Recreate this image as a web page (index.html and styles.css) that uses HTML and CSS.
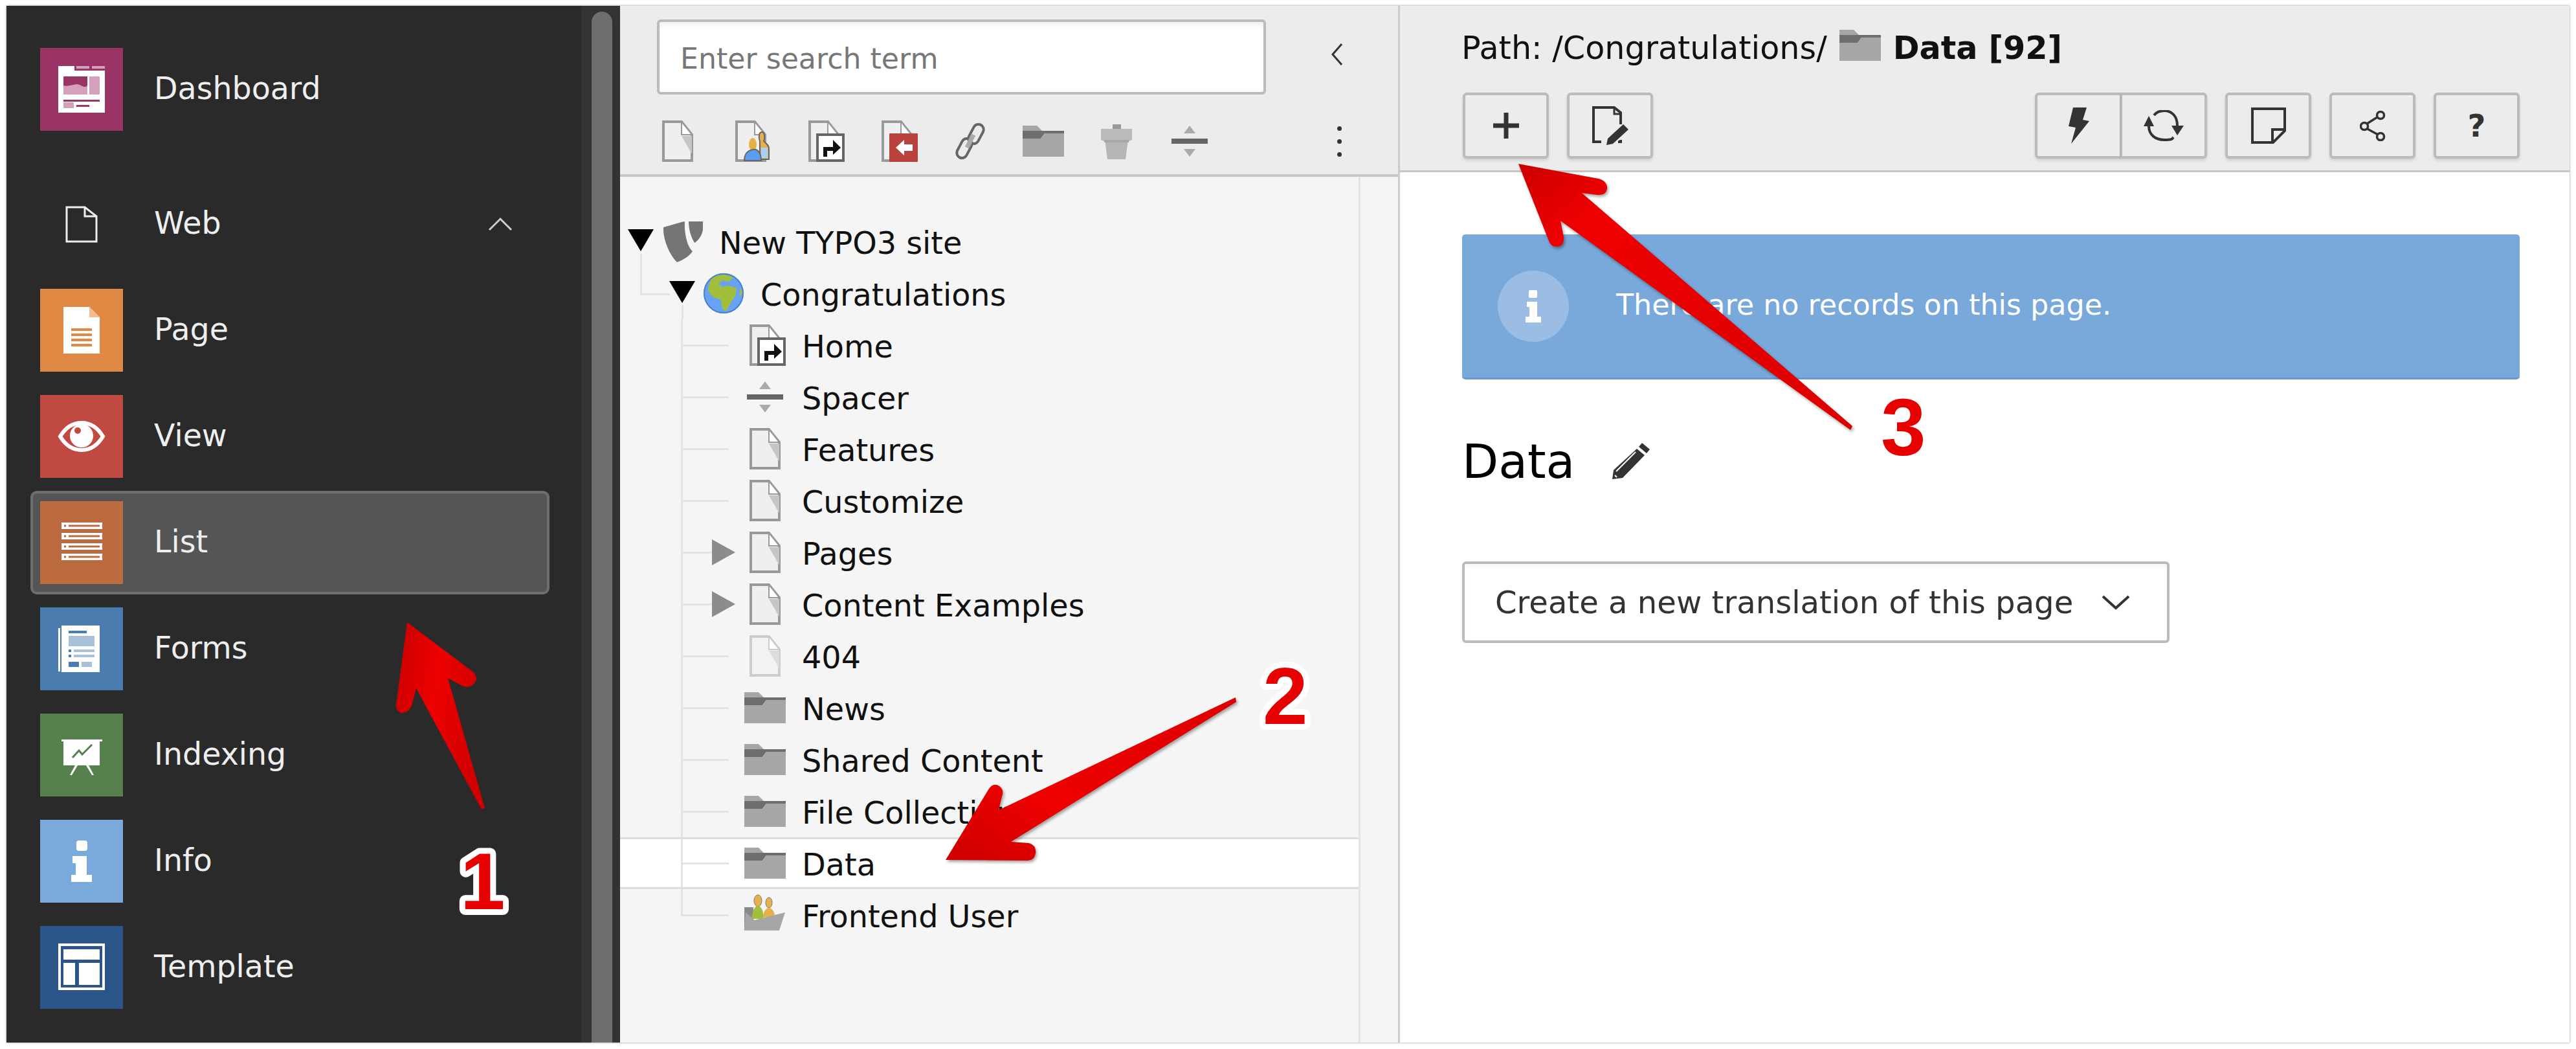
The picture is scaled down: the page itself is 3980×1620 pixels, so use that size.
FILE: index.html
```html
<!DOCTYPE html>
<html lang="en">
<head>
  <meta charset="UTF-8">
  <title>TYPO3 Backend</title>
  <link rel="stylesheet" href="styles.css">
</head>
<body>
  <!-- shared icons -->
  <svg class="sprites" xmlns="http://www.w3.org/2000/svg">
    <symbol id="page" viewBox="0 0 64 64">
      <path d="M10 2H38L54 22V62H10Z" fill="#efefef" stroke="#999" stroke-width="4"/>
      <path d="M38 2V22H54L38 2Z" fill="#fff" stroke="#999" stroke-width="2"/>
      <path d="M38 24H54V52Z" fill="#c6c6c6"/>
    </symbol>
    <symbol id="page-pale" viewBox="0 0 64 64">
      <path d="M10 2H38L54 22V62H10Z" fill="#f2f2f2" stroke="#ccc" stroke-width="4"/>
      <path d="M38 2V22H54L38 2Z" fill="#fff" stroke="#ccc" stroke-width="2"/>
      <path d="M38 24H54V52Z" fill="#ddd"/>
    </symbol>
    <symbol id="page-base" viewBox="0 0 64 64">
      <path d="M10 2H38L54 22V62H10Z" fill="#efefef" stroke="#999" stroke-width="4"/>
      <path d="M38 2V22H54L38 2Z" fill="#fff" stroke="#999" stroke-width="2"/>
    </symbol>
    <symbol id="shortcut" viewBox="0 0 64 64">
      <use href="#page-base"/>
      <rect x="22" y="22" width="40" height="40" fill="#fff" stroke="#666" stroke-width="4"/>
      <path d="M46 30L58 42 46 53V47H37V56H31V41H46Z" fill="#111"/>
    </symbol>
    <symbol id="folder" viewBox="0 0 64 64">
      <path d="M0 8H22L30 16H0Z" fill="#a6a6a6"/>
      <path d="M0 16H64V20H34L28 28H0Z" fill="#6e6e6e"/>
      <path d="M0 28H28L34 20H64V56H0Z" fill="#a6a6a6"/>
    </symbol>
    <symbol id="spacer" viewBox="0 0 64 64">
      <path d="M32 8L41 20H23Z" fill="#aaa"/>
      <rect x="4" y="28" width="56" height="8" fill="#666"/>
      <path d="M23 44H41L32 56Z" fill="#aaa"/>
    </symbol>
  </svg>

  <div class="frame">
    <!-- module menu -->
    <aside class="modules">
      <nav class="menu">
        <a class="mod mod-first">
          <span class="tile dashboard">
            <svg width="128" height="128" viewBox="0 0 128 128">
              <path d="M28 28H53V35H100V100H28Z" fill="#fff"/>
              <path d="M56 28H76V32H56ZM80 28H100V32H80Z" fill="#d4a0bb"/>
              <path d="M36 44H73V72H36ZM76 44H92V72H76Z" fill="#d4a0bb"/>
              <path d="M36 44H73V58C68 64 62 55 56 56S42 60 36 58Z" fill="#9a3366"/>
              <path d="M36 80H92V83H36ZM56 88H76V91H56Z" fill="#9a3366"/>
              <rect x="36" y="84" width="16" height="9" fill="#d4a0bb"/>
            </svg>
          </span>
          <span class="mod-label">Dashboard</span>
        </a>
        <a class="mod">
          <span class="tile">
            <svg width="128" height="128" viewBox="0 0 128 128">
              <path d="M41 38H69L87 52V91H41Z" fill="none" stroke="#eee" stroke-width="3"/>
              <path d="M69 38V52H87" fill="none" stroke="#eee" stroke-width="3"/>
            </svg>
          </span>
          <span class="mod-label">Web</span>
          <svg class="mod-caret" width="38" height="22" viewBox="0 0 38 22"><path d="M2 20L19 3 36 20" fill="none" stroke="#ccc" stroke-width="3"/></svg>
        </a>
        <a class="mod">
          <span class="tile page">
            <svg width="128" height="128" viewBox="0 0 128 128">
              <path d="M36 28H76L92 44V100H36Z" fill="#fff"/>
              <path d="M76 28L92 44H76Z" fill="#f2bd92"/>
              <path d="M48 61H80V65H48ZM48 69H80V73H48ZM48 77H80V81H48ZM48 85H80V89H48Z" fill="#e08844"/>
            </svg>
          </span>
          <span class="mod-label">Page</span>
        </a>
        <a class="mod">
          <span class="tile view">
            <svg width="128" height="128" viewBox="0 0 128 128">
              <path d="M31 64C40 49 52 43 64 43S88 49 97 64C88 79 76 85 64 85S40 79 31 64Z" fill="none" stroke="#fff" stroke-width="6"/>
              <circle cx="64" cy="63" r="18" fill="#fff"/>
              <circle cx="58" cy="55" r="5" fill="#c04a42"/>
            </svg>
          </span>
          <span class="mod-label">View</span>
        </a>
        <a class="mod active">
          <span class="tile list">
            <svg width="128" height="128" viewBox="0 0 128 128">
              <path d="M33 33H96V43H33ZM37 36.500H40V39.500H37ZM44 36.500H92V39.500H44Z" fill="#fff" fill-rule="evenodd"/>
              <path d="M33 49H96V59H33ZM37 52.500H40V55.500H37ZM44 52.500H92V55.500H44Z" fill="#fff" fill-rule="evenodd"/>
              <path d="M33 65H96V75H33ZM37 68.500H40V71.500H37ZM44 68.500H92V71.500H44Z" fill="#fff" fill-rule="evenodd"/>
              <path d="M33 81H96V91H33ZM37 84.500H40V87.500H37ZM44 84.500H92V87.500H44Z" fill="#fff" fill-rule="evenodd"/>
            </svg>
          </span>
          <span class="mod-label">List</span>
        </a>
        <a class="mod">
          <span class="tile forms">
            <svg width="128" height="128" viewBox="0 0 128 128">
              <path d="M28 32H31V99H28ZM33 28H92V100H33Z" fill="#fff"/>
              <path d="M44 36H72V40H44Z" fill="#4a7cb0"/>
              <path d="M44 44H84V60H44Z" fill="#a9c0da"/>
              <path d="M44 65H48V69H44ZM44 73H48V77H44Z" fill="#4a7cb0"/>
              <path d="M52 65H84V69H52ZM52 73H84V77H52Z" fill="#a9c0da"/>
              <path d="M44 84H60V92H44Z" fill="#4a7cb0"/>
              <path d="M64 84H80V92H64Z" fill="#a9c0da"/>
            </svg>
          </span>
          <span class="mod-label">Forms</span>
        </a>
        <a class="mod">
          <span class="tile indexing">
            <svg width="128" height="128" viewBox="0 0 128 128">
              <path d="M33 40H96V43H92V80H36V43H33Z" fill="#fff"/>
              <path d="M50 68L60 57 65 63 80 48" fill="none" stroke="#56804d" stroke-width="3"/>
              <path d="M54 80H58L49 95H46ZM71 80H75L83 95H80Z" fill="#fff"/>
            </svg>
          </span>
          <span class="mod-label">Indexing</span>
        </a>
        <a class="mod">
          <span class="tile info">
            <svg width="128" height="128" viewBox="0 0 128 128">
              <rect x="56" y="32" width="17" height="16" rx="4" fill="#fff"/>
              <path d="M50 56H72V85H80V96H48V85H55V67H50Z" fill="#fff"/>
            </svg>
          </span>
          <span class="mod-label">Info</span>
        </a>
        <a class="mod">
          <span class="tile template">
            <svg width="128" height="128" viewBox="0 0 128 128">
              <rect x="30" y="29" width="68" height="68" fill="none" stroke="#fff" stroke-width="4"/>
              <path d="M36 36H92V52H36ZM36 57H54V91H36ZM60 57H92V91H60Z" fill="#fff"/>
            </svg>
          </span>
          <span class="mod-label">Template</span>
        </a>
      </nav>
      <div class="menu-scroll"><div class="menu-thumb"></div></div>
    </aside>

    <!-- page tree -->
    <section class="tree">
      <div class="tree-head">
        <div class="search-row">
          <input class="search" type="text" placeholder="Enter search term">
          <svg class="collapse" width="22" height="34" viewBox="0 0 22 34"><path d="M18 1L4 17 18 33" fill="none" stroke="#333" stroke-width="3"/></svg>
        </div>
        <div class="tools">
          <span class="tool"><svg width="64" height="64"><use href="#page"/></svg></span>
          <span class="tool">
            <svg width="64" height="64" viewBox="0 0 64 64">
              <use href="#page-base"/>
              <path d="M46 42V32C44 28 44 18 49 18S54 28 52 32C56 36 60 38 60 44V60H46Z" fill="#e8b04c" stroke="#666" stroke-width="2"/>
              <path d="M48 42H58V58H48Z" fill="#a9d0f0"/>
              <ellipse cx="35" cy="37" rx="6" ry="10" fill="#e8b04c"/>
              <path d="M22 62C22 52 26 47 35 45S48 52 48 62Z" fill="#5b9bf0" stroke="#666" stroke-width="2"/>
            </svg>
          </span>
          <span class="tool"><svg width="64" height="64"><use href="#shortcut"/></svg></span>
          <span class="tool">
            <svg width="64" height="64" viewBox="0 0 64 64">
              <use href="#page-base"/>
              <rect x="20" y="20" width="44" height="44" fill="#b9423c"/>
              <path d="M30 42L43 30V37H56V47H43V54Z" fill="#fff"/>
            </svg>
          </span>
          <span class="tool">
            <svg width="64" height="64" viewBox="0 0 64 64">
              <rect x="33" y="5" width="16" height="32" rx="8" fill="none" stroke="#666" stroke-width="4" transform="rotate(28 41 21)"/>
              <rect x="15" y="27" width="16" height="32" rx="8" fill="none" stroke="#666" stroke-width="4" transform="rotate(28 23 43)"/>
              <path d="M37 22L27 42" stroke="#aaa" stroke-width="7"/>
            </svg>
          </span>
          <span class="tool"><svg width="64" height="64"><use href="#folder"/></svg></span>
          <span class="tool">
            <svg width="64" height="64" viewBox="0 0 64 64">
              <rect x="26" y="6" width="13" height="7" fill="#999"/>
              <path d="M8 13H56V30L52 32H12L8 30Z" fill="#bbb"/>
              <path d="M14 30H50L46 60H18Z" fill="#b5b5b5"/>
              <path d="M13 30H51V34H13Z" fill="#a8a8a8"/>
            </svg>
          </span>
          <span class="tool"><svg width="64" height="64"><use href="#spacer"/></svg></span>
          <span class="dots"><i></i><i></i><i></i></span>
        </div>
      </div>
      <div class="tree-body">
        <ul class="nodes">
          <li class="node l0">
            <span class="tw"><b class="open"></b></span>
            <span class="ic">
              <svg width="64" height="64" viewBox="0 0 64 64">
                <path d="M31 2L3 10C2 28 12 52 24 64 34 60 44 54 48 47 40 40 35 20 36 1Z" fill="#757575"/>
                <path d="M42 1H64V12C64 20 58 30 51 34 46 26 42 14 42 1Z" fill="#757575"/>
              </svg>
            </span>
            <span class="label">New TYPO3 site</span>
          </li>
          <li class="node l1">
            <span class="tw"><b class="open"></b></span>
            <span class="ic">
              <svg width="64" height="64" viewBox="0 0 64 64">
                <circle cx="32" cy="32" r="31" fill="#68a2f4"/>
                <path d="M16 6C24 2 40 2 46 8L40 14 30 12 24 18 30 22 40 20 52 24 50 36 42 48 36 60 30 56 28 42 16 38 8 28 10 16Z" fill="#a2bf3c"/>
                <path d="M58 24L62 30 56 38Z" fill="#a2bf3c"/>
                <circle cx="32" cy="32" r="30" fill="none" stroke="#4a80cc" stroke-width="2"/>
              </svg>
            </span>
            <span class="label">Congratulations</span>
          </li>
          <li class="node l2">
            <span class="tw"></span>
            <span class="ic"><svg width="64" height="64"><use href="#shortcut"/></svg></span>
            <span class="label">Home</span>
          </li>
          <li class="node l2">
            <span class="tw"></span>
            <span class="ic"><svg width="64" height="64"><use href="#spacer"/></svg></span>
            <span class="label">Spacer</span>
          </li>
          <li class="node l2">
            <span class="tw"></span>
            <span class="ic"><svg width="64" height="64"><use href="#page"/></svg></span>
            <span class="label">Features</span>
          </li>
          <li class="node l2">
            <span class="tw"></span>
            <span class="ic"><svg width="64" height="64"><use href="#page"/></svg></span>
            <span class="label">Customize</span>
          </li>
          <li class="node l2">
            <span class="tw"><b class="closed"></b></span>
            <span class="ic"><svg width="64" height="64"><use href="#page"/></svg></span>
            <span class="label">Pages</span>
          </li>
          <li class="node l2">
            <span class="tw"><b class="closed"></b></span>
            <span class="ic"><svg width="64" height="64"><use href="#page"/></svg></span>
            <span class="label">Content Examples</span>
          </li>
          <li class="node l2">
            <span class="tw"></span>
            <span class="ic"><svg width="64" height="64"><use href="#page-pale"/></svg></span>
            <span class="label">404</span>
          </li>
          <li class="node l2">
            <span class="tw"></span>
            <span class="ic"><svg width="64" height="64"><use href="#folder"/></svg></span>
            <span class="label">News</span>
          </li>
          <li class="node l2">
            <span class="tw"></span>
            <span class="ic"><svg width="64" height="64"><use href="#folder"/></svg></span>
            <span class="label">Shared Content</span>
          </li>
          <li class="node l2">
            <span class="tw"></span>
            <span class="ic"><svg width="64" height="64"><use href="#folder"/></svg></span>
            <span class="label">File Collections</span>
          </li>
          <li class="node l2 selected">
            <span class="tw"></span>
            <span class="ic"><svg width="64" height="64"><use href="#folder"/></svg></span>
            <span class="label">Data</span>
          </li>
          <li class="node l2 last">
            <span class="tw"></span>
            <span class="ic">
              <svg width="64" height="64" viewBox="0 0 64 64">
                <path d="M0 20H14V56H0Z" fill="#8a8a8a"/>
                <ellipse cx="21" cy="10" rx="6" ry="9" fill="#e8b04c" stroke="#777" stroke-width="1"/>
                <path d="M12 38C12 26 16 18 21 18S30 26 30 38Z" fill="#a2bf3c"/>
                <ellipse cx="38" cy="13" rx="5" ry="8" fill="#e8b04c" stroke="#777" stroke-width="1"/>
                <path d="M29 36C29 28 33 21 38 21S47 28 47 34Z" fill="#e8b04c"/>
                <path d="M2 28L16 40 63 28 54 56H0Z" fill="#a6a6a6"/>
              </svg>
            </span>
            <span class="label">Frontend User</span>
          </li>
        </ul>
      </div>
    </section>

    <!-- content -->
    <main class="content">
      <header class="doc-head">
        <div class="path">
          <span>Path: /Congratulations/</span>
          <svg class="path-icon" width="64" height="64"><use href="#folder"/></svg>
          <strong>Data [92]</strong>
        </div>
        <div class="bar">
          <div class="bar-group">
            <button class="btn">
              <svg width="40" height="40" viewBox="0 0 40 40"><path d="M20 0V40M0 20H40" stroke="#333" stroke-width="7"/></svg>
            </button>
            <button class="btn">
              <svg width="56" height="60" viewBox="0 0 56 60">
                <path d="M44 28V10L34 2H2V55H14M44 52V55H40" fill="none" stroke="#333" stroke-width="4"/>
                <path d="M34 2V12H44" fill="none" stroke="#333" stroke-width="3"/>
                <path d="M48 28L56 36 32 58 22 60 24 50Z" fill="#333"/>
              </svg>
            </button>
          </div>
          <div class="bar-group">
            <div class="btn-pair">
              <button class="btn">
                <svg width="32" height="56" viewBox="0 0 32 56"><path d="M7 0H28L22 19 32 21 4 56 11 31 0 29Z" fill="#333"/></svg>
              </button>
              <button class="btn">
                <svg width="62" height="48" viewBox="0 0 62 48">
                  <path d="M8 25C8 38 18 46 32 46S44 44 46 42M16 8C20 3 26 1 32 1 44 1 52 10 52 24" fill="none" stroke="#333" stroke-width="4"/>
                  <path d="M8 9L16 25H0ZM43 24H62L52 39Z" fill="#333"/>
                </svg>
              </button>
            </div>
            <button class="btn">
              <svg width="54" height="56" viewBox="0 0 54 56">
                <path d="M2 2H52V36L34 54H2Z" fill="none" stroke="#333" stroke-width="4"/>
                <path d="M52 34H33V54" fill="none" stroke="#333" stroke-width="4"/>
              </svg>
            </button>
            <button class="btn">
              <svg width="40" height="47" viewBox="0 0 40 47">
                <path d="M30 8L8 22M8 26L30 38" stroke="#333" stroke-width="3.500"/>
                <circle cx="32" cy="7" r="5.500" fill="#ececec" stroke="#333" stroke-width="3.500"/>
                <circle cx="7" cy="24" r="5.500" fill="#ececec" stroke="#333" stroke-width="3.500"/>
                <circle cx="32" cy="40" r="5.500" fill="#ececec" stroke="#333" stroke-width="3.500"/>
              </svg>
            </button>
            <button class="btn btn-help">?</button>
          </div>
        </div>
      </header>
      <div class="doc-body">
        <div class="callout">
          <span class="callout-icon">
            <svg width="24" height="50" viewBox="0 0 24 50">
              <rect x="5" y="0" width="13" height="12" rx="2" fill="#fff"/>
              <path d="M2 18H18V41H24V50H0V41H6V26H2Z" fill="#fff"/>
            </svg>
          </span>
          <span class="callout-text">There are no records on this page.</span>
        </div>
        <div class="title">
          <h1>Data</h1>
          <svg width="58" height="56" viewBox="0 0 58 56">
            <path d="M46 0L58 10 53 16 41 6ZM38 9L50 19 16 54 0 56 2 42Z" fill="#333"/>
            <path d="M6 44L36 14M4 50L7 53" stroke="#fff" stroke-width="2"/>
          </svg>
        </div>
        <div class="lang-select">
          <span>Create a new translation of this page</span>
          <svg width="44" height="24" viewBox="0 0 44 24"><path d="M2 3L22 21 42 3" fill="none" stroke="#333" stroke-width="4"/></svg>
        </div>
      </div>
    </main>
  </div>

  <!-- tutorial annotations painted over the screenshot -->
  <svg class="annotations" width="3980" height="1620" viewBox="0 0 3980 1620">
    <defs>
      <linearGradient id="red1" x1="0" y1="0" x2="1" y2="0.300">
        <stop offset="0" stop-color="#c80000"/>
        <stop offset="0.500" stop-color="#ee0000"/>
        <stop offset="1" stop-color="#d00000"/>
      </linearGradient>
      <linearGradient id="red2" x1="0" y1="1" x2="1" y2="0">
        <stop offset="0" stop-color="#cc0000"/>
        <stop offset="0.350" stop-color="#ee0000"/>
        <stop offset="1" stop-color="#dd0000"/>
      </linearGradient>
      <linearGradient id="red3" x1="0" y1="0" x2="1" y2="1">
        <stop offset="0" stop-color="#cc0000"/>
        <stop offset="0.200" stop-color="#ee0000"/>
        <stop offset="1" stop-color="#dd0000"/>
      </linearGradient>
    </defs>
    <path d="M629 961L730 1037Q742 1048 730 1058 722 1064 712 1058L692 1047 749 1248 744 1250 643 1063 636 1090Q630 1102 620 1101 611 1098 612 1088Z" fill="url(#red1)"/>
    <path class="arrow" d="M1909 1077L1910 1084 1562 1300 1590 1302Q1602 1306 1600 1318 1598 1330 1586 1329L1461 1328 1528 1218Q1535 1208 1544 1214 1552 1220 1548 1230L1543 1251Z" fill="url(#red2)"/>
    <path class="arrow" d="M2346 253L2470 276Q2484 280 2483 292 2481 302 2468 301L2444 298 2862 658 2859 664 2411 341 2416 366Q2417 380 2406 381 2396 381 2393 372Z" fill="url(#red3)"/>
    <text class="step" x="711" y="1404">1</text>
    <text class="step" x="1951" y="1118">2</text>
    <text class="step" x="2906" y="703">3</text>
  </svg>
</body>
</html>
```

FILE: styles.css
```css
body {
  margin: 0;
  width: 3980px;
  height: 1620px;
  position: relative;
  overflow: hidden;
  background-color: #fff;
  font-family: "DejaVu Sans", sans-serif;
  color: #111;
}

svg {
  display: block;
  flex: none;
}

.sprites {
  display: none;
}

.frame {
  display: flex;
  width: 3960px;
  height: 1601px;
  margin: 9px 0 0 10px;
  position: absolute;
  box-shadow: 0 0 3px rgba(0, 0, 0, 0.45);
}

/* module menu */
.modules {
  display: flex;
  width: 948px;
  flex: none;
  background-color: #2a2a2a;
}

.menu {
  width: 888px;
  padding: 49px 0 0 37px;
  box-sizing: border-box;
  display: flex;
  flex-direction: column;
  gap: 4px;
}

.mod {
  display: flex;
  align-items: center;
  width: 802px;
  height: 160px;
  box-sizing: border-box;
  padding: 12px 11px;
  border: 4px solid transparent;
  border-radius: 10px;
  color: #eee;
  font-size: 47.500px;
}

.mod-first {
  margin-bottom: 44px;
}

.mod.active {
  background-color: #555;
  border-color: #6e6e6e;
}

.tile {
  width: 128px;
  height: 128px;
  flex: none;
  margin-right: 48px;
}

.tile.dashboard { background-color: #9a3366; }
.tile.page { background-color: #e08844; }
.tile.view { background-color: #c04a42; }
.tile.list { background-color: #bc6b40; }
.tile.forms { background-color: #4a7cb0; }
.tile.indexing { background-color: #56804d; }
.tile.info { background-color: #7aa9dc; }
.tile.template { background-color: #2b5589; }

.mod-label {
  flex: 1;
  margin-top: -4px;
}

.mod-caret {
  margin-right: 42px;
}

.menu-scroll {
  width: 60px;
  background-color: #333;
  padding: 9px 12px 0 16px;
  box-sizing: border-box;
}

.menu-thumb {
  height: 100%;
  background-color: #6e6e6e;
  border-radius: 16px 16px 0 0;
}

/* page tree */
.tree {
  display: flex;
  flex-direction: column;
  width: 1205px;
  flex: none;
  box-sizing: border-box;
  border-right: 3px solid #ccc;
  background-color: #f5f5f5;
}

.tree-head {
  height: 264px;
  box-sizing: border-box;
  flex: none;
  padding-top: 21px;
  background-color: #ececec;
  border-bottom: 4px solid #c6c6c6;
}

.search-row {
  display: flex;
  align-items: center;
  padding-left: 57px;
  height: 116px;
}

.search {
  width: 941px;
  height: 116px;
  box-sizing: border-box;
  padding: 4px 32px 0;
  border: 4px solid #bbb;
  border-radius: 6px;
  background-color: #fff;
  font-family: inherit;
  font-size: 44.200px;
  box-shadow: inset 0 6px 6px rgba(0, 0, 0, 0.05);
}

.search::placeholder {
  color: #777;
  opacity: 1;
}

.collapse {
  margin: -8px 0 0 99px;
}

.tools {
  display: flex;
  align-items: center;
  height: 64px;
  margin-top: 40px;
  padding-left: 32px;
}

.tool {
  width: 113px;
  display: flex;
  justify-content: center;
}

.dots {
  display: flex;
  flex-direction: column;
  gap: 13px;
  margin-left: 172px;
}

.dots i {
  width: 7px;
  height: 7px;
  border-radius: 50%;
  background-color: #333;
}

.tree-body {
  flex: 1;
}

.nodes {
  list-style: none;
  margin: 0;
  padding: 60px 0 0;
  width: 1144px;
  height: 100%;
  box-sizing: border-box;
  border-right: 3px solid #e3e3e3;
}

.node {
  display: flex;
  align-items: center;
  height: 80px;
  box-sizing: border-box;
  position: relative;
  font-size: 47.700px;
  color: #111;
}

.node.l1 { padding-left: 64px; }
.node.l2 { padding-left: 128px; }

.tw {
  width: 64px;
  height: 100%;
  flex: none;
  display: flex;
  align-items: center;
  justify-content: center;
  position: relative;
}

.ic {
  width: 64px;
  flex: none;
  position: relative;
}

.label {
  margin: 4px 0 0 25px;
  white-space: nowrap;
}

/* tree guide lines */
.node.l2::before {
  content: "";
  position: absolute;
  left: 94px;
  top: 0;
  bottom: 0;
  width: 3px;
  background-color: #e3e3e3;
}

.node.l2.last::before {
  bottom: 38px;
}

.node.l2 .tw::before {
  content: "";
  position: absolute;
  left: -32px;
  width: 72px;
  top: 39px;
  height: 3px;
  background-color: #e3e3e3;
}

.node.l1::before {
  content: "";
  position: absolute;
  left: 31px;
  top: -21px;
  height: 64px;
  width: 46px;
  box-sizing: border-box;
  border-left: 3px solid #e3e3e3;
  border-bottom: 3px solid #e3e3e3;
}

.node.l1 .tw::after {
  content: "";
  position: absolute;
  left: 31px;
  top: 58px;
  bottom: 0;
  width: 3px;
  background-color: #e3e3e3;
}

.node.selected {
  background-color: #fff;
  border-top: 3px solid #ddd;
  border-bottom: 3px solid #ddd;
}

.node.selected .tw::before {
  top: 36px;
}

.open {
  width: 0;
  height: 0;
  border-left: 20px solid transparent;
  border-right: 20px solid transparent;
  border-top: 34px solid #000;
  position: relative;
  z-index: 1;
  margin-top: -5px;
}

.closed {
  width: 0;
  height: 0;
  border-top: 20px solid transparent;
  border-bottom: 20px solid transparent;
  border-left: 36px solid #8c8c8c;
  position: relative;
  z-index: 1;
}

/* content */
.content {
  flex: 1;
  min-width: 0;
  background-color: #fff;
}

.doc-head {
  height: 257px;
  box-sizing: border-box;
  padding: 28px 77px 0 95px;
  background-color: #ececec;
  border-bottom: 3px solid #c6c6c6;
}

.path {
  display: flex;
  align-items: center;
  height: 70px;
  padding-top: 4px;
  box-sizing: border-box;
  font-size: 49.200px;
  white-space: nowrap;
}

.path-icon {
  margin: -8px 19px 0 19px;
}

.bar {
  display: flex;
  justify-content: space-between;
  margin-top: 36px;
  margin-left: 2px;
}

.bar-group {
  display: flex;
  gap: 28px;
}

.btn-pair {
  display: flex;
}

.btn {
  width: 133px;
  height: 102px;
  box-sizing: border-box;
  padding: 0;
  display: flex;
  align-items: center;
  justify-content: center;
  background-color: #ececec;
  border: 4px solid #bbb;
  border-radius: 6px;
  box-shadow: 0 3px 4px rgba(0, 0, 0, 0.12);
}

.btn-pair .btn:first-child {
  border-radius: 6px 0 0 6px;
  border-right-width: 2px;
}

.btn-pair .btn:last-child {
  border-radius: 0 6px 6px 0;
  border-left-width: 2px;
}

.btn-help {
  font-family: inherit;
  font-size: 48px;
  font-weight: 700;
  color: #333;
}

.doc-body {
  padding: 96px 77px 0 96px;
}

.callout {
  display: flex;
  align-items: center;
  height: 224px;
  box-sizing: border-box;
  padding-left: 55px;
  background-color: #79a8da;
  border-bottom: 3px solid #6a9ad0;
  border-radius: 5px;
  color: #fff;
  font-size: 44.400px;
}

.callout-icon {
  width: 110px;
  height: 110px;
  flex: none;
  border-radius: 50%;
  background-color: #9bbde3;
  display: flex;
  align-items: center;
  justify-content: center;
}

.callout-text {
  margin-left: 73px;
  margin-top: -4px;
}

.title {
  display: flex;
  align-items: center;
  gap: 58px;
  height: 100px;
  margin-top: 76px;
}

.title h1 {
  margin: 0;
  font-size: 73px;
  font-weight: 400;
  color: #000;
}

.lang-select {
  display: flex;
  align-items: center;
  justify-content: space-between;
  width: 1093px;
  height: 126px;
  box-sizing: border-box;
  margin-top: 105px;
  padding: 0 57px 0 47px;
  border: 4px solid #bbb;
  border-radius: 6px;
  box-shadow: inset 0 5px 5px rgba(0, 0, 0, 0.03);
  font-size: 48.100px;
  color: #333;
  white-space: nowrap;
}

/* annotations */
.annotations {
  position: absolute;
  left: 0;
  top: 0;
}

.arrow {
  filter: drop-shadow(2px 3px 2px rgba(0, 0, 0, 0.35));
}

.step {
  font-family: "Liberation Sans", sans-serif;
  font-weight: 700;
  font-size: 125px;
  fill: #e60000;
  stroke: #fff;
  stroke-width: 18px;
  stroke-linejoin: round;
  paint-order: stroke;
}
```
